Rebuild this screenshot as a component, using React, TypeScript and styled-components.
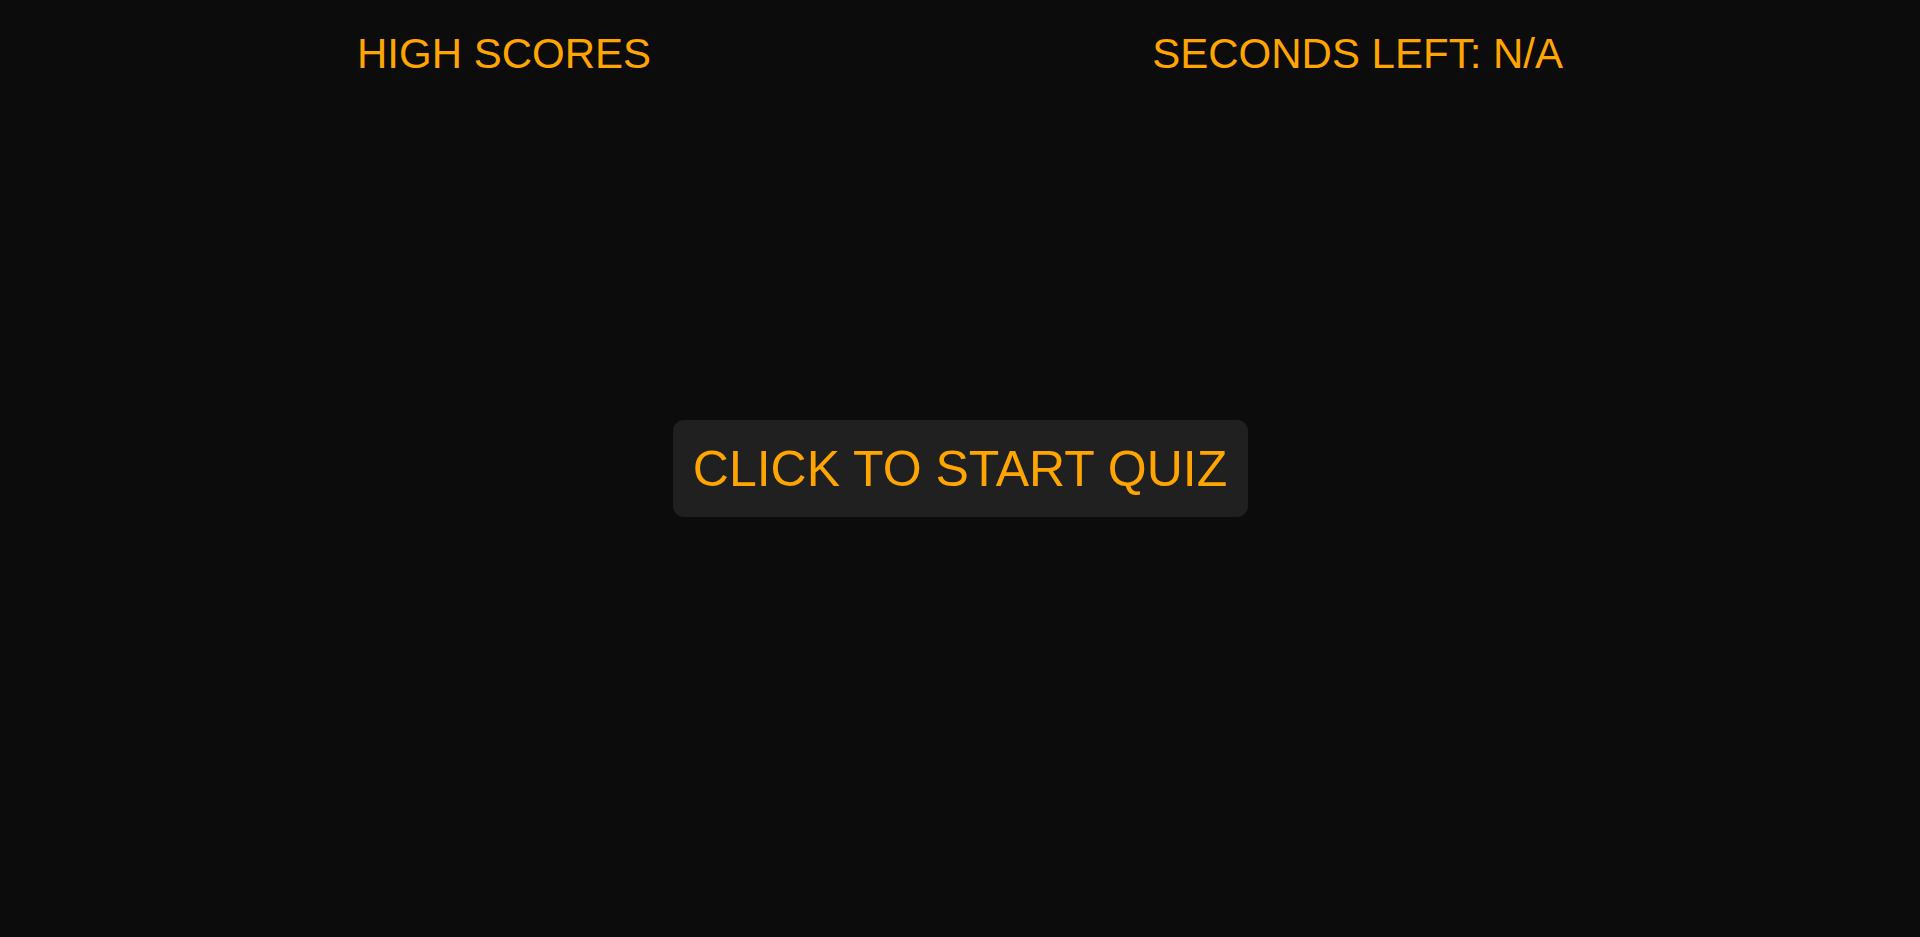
import React from "react";
import styled, { createGlobalStyle } from "styled-components";

const GlobalStyle = createGlobalStyle`
  html, body {
    margin: 0;
    padding: 0;
    background: #0c0c0c;
  }
  body {
    font-family: "Liberation Sans", Arial, sans-serif;
    color: #ffa500;
  }
`;

const Page = styled.div`
  min-height: 937px;
  height: 100vh;
  display: flex;
  flex-direction: column;
  background: #0c0c0c;
  position: relative;
`;

const Header = styled.header`
  width: 1206px;
  margin: 0 auto;
  padding-top: 30px;
  display: flex;
  justify-content: space-between;
  align-items: flex-start;
`;

const HeaderItem = styled.div`
  font-family: "Liberation Sans", Arial, sans-serif;
  font-size: 42px;
  color: #ffa500;
  line-height: normal;
  cursor: pointer;
`;

const Stage = styled.main`
  position: absolute;
  inset: 0;
  display: flex;
  align-items: center;
  justify-content: center;
  pointer-events: none;
`;

const StartButton = styled.button`
  pointer-events: auto;
  width: 575px;
  height: 97px;
  border: none;
  border-radius: 11px;
  background: #202020;
  color: #ffa500;
  font-family: "Liberation Sans", Arial, sans-serif;
  font-size: 50px;
  padding: 0;
  cursor: pointer;
  display: flex;
  align-items: center;
  justify-content: center;
`;

export default function App() {
  return (
    <>
      <GlobalStyle />
      <Page>
        <Header>
          <HeaderItem>HIGH SCORES</HeaderItem>
          <HeaderItem>SECONDS LEFT: N/A</HeaderItem>
        </Header>
        <Stage>
          <StartButton>CLICK TO START QUIZ</StartButton>
        </Stage>
      </Page>
    </>
  );
}
